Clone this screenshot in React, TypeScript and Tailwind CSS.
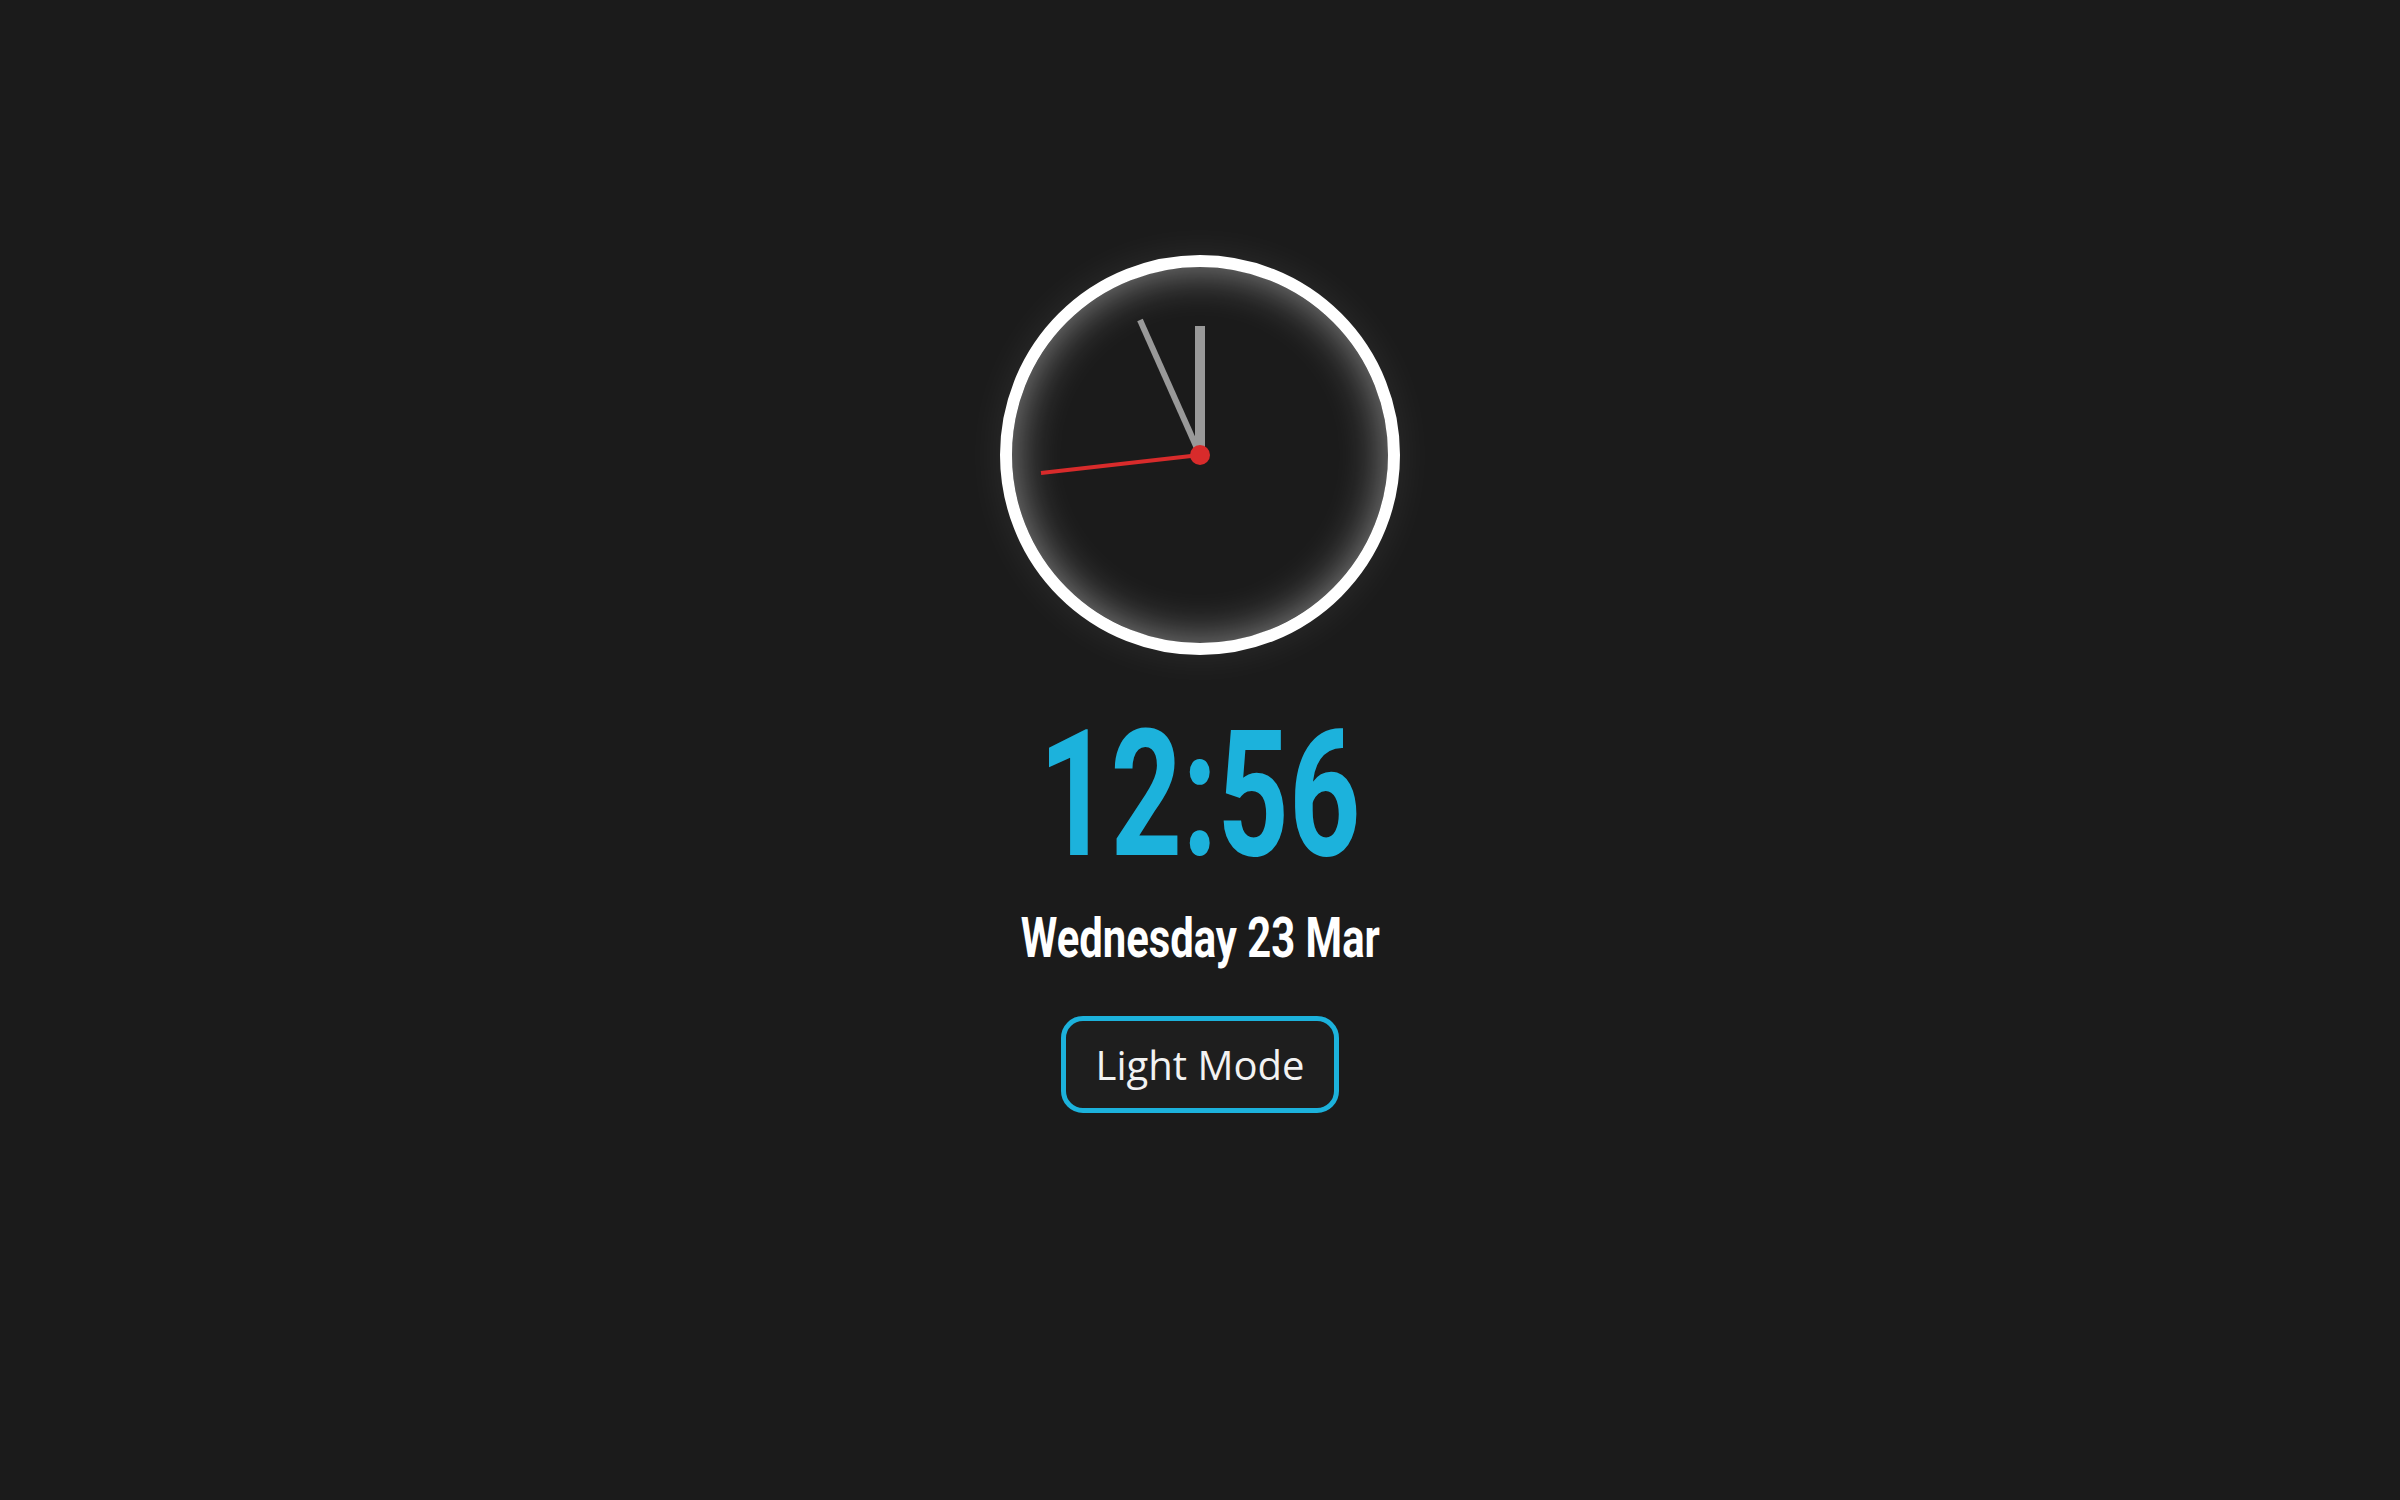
import { useState } from 'react';

function ClockFace() {
  // 12:56:44 — hour hand sits on 12, minute hand at 56, seconds at 44
  return (
    <div className="w-[400px] h-[400px] rounded-full border-[12px] border-white bg-[#1b1b1b] shadow-[0_0_40px_rgba(255,255,255,0.08),inset_0_0_45px_rgba(255,255,255,0.5)]">
      <svg viewBox="0 0 376 376" className="w-full h-full">
        <rect x="183" y="59" width="10" height="129" fill="#999999" />
        <line x1="188" y1="188" x2="128" y2="53" stroke="#999999" strokeWidth="6" />
        <line x1="188" y1="188" x2="29" y2="206" stroke="#d82b2b" strokeWidth="4" />
        <circle cx="188" cy="188" r="10" fill="#d82b2b" />
      </svg>
    </div>
  );
}

export default function App() {
  const [dark, setDark] = useState(true);

  return (
    <main className="min-h-screen bg-[#1b1b1b] flex flex-col items-center pt-[255px]">
      <ClockFace />

      <div className="mt-[52px] h-[176px] text-[176px] leading-none font-bold text-[#1cb2dc] font-['Roboto',sans-serif] scale-x-[0.71]">
        12:56
      </div>

      <div className="mt-[28px] h-[55px] text-[55px] leading-none font-bold text-white font-['Roboto',sans-serif] scale-x-[0.76] whitespace-nowrap">
        Wednesday 23 Mar
      </div>

      <button
        onClick={() => setDark(!dark)}
        className="mt-[50px] w-[278px] h-[97px] rounded-[22px] border-[5px] border-[#1cb2dc] bg-[#1e1e1e] flex items-center justify-center text-[40px] leading-none text-[#f2f2f2] font-['Open_Sans',sans-serif]"
      >
        {dark ? 'Light Mode' : 'Dark Mode'}
      </button>
    </main>
  );
}
